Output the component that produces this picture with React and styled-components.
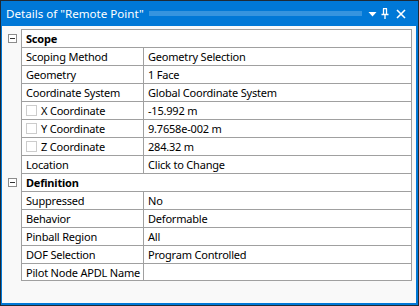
import React from 'react';
import styled, { createGlobalStyle } from 'styled-components';

const GlobalStyle = createGlobalStyle`
  html, body { margin: 0; padding: 0; background: #ffffff; }
  body { font-family: "Noto Sans", "Liberation Sans", sans-serif; }
`;

const Window = styled.div`
  width: 419px;
  height: 306px;
  box-sizing: border-box;
  border: 1px solid #1e2a36;
  background: #0078d7;
  display: flex;
  flex-direction: column;
`;

const TitleBar = styled.div`
  height: 25px;
  display: flex;
  align-items: center;
  padding: 0 12px 0 5px;
  color: #ffffff;
  font-size: 11.6px;
  gap: 5px;
`;

const Title = styled.span`
  white-space: nowrap;
`;

const Grip = styled.div`
  flex: 1;
  height: 5px;
  margin-right: 1px;
  background-image: radial-gradient(circle, rgba(255, 255, 255, 0.45) 0.6px, transparent 0.8px);
  background-size: 2px 2px;
`;

const TitleIcons = styled.div`
  display: flex;
  align-items: center;
  gap: 4px;
`;

const Body = styled.div`
  flex: 1;
  margin: 0 2px 2px 1px;
  background: #f9f9f9;
  padding: 3px 4px 0 6px;
`;

const Table = styled.div`
  display: grid;
  grid-template-columns: 13px 122px 1fr;
`;

const Toggle = styled.div`
  display: flex;
  align-items: center;
  justify-content: flex-start;
`;

const ToggleBox = styled.div`
  width: 9px;
  height: 9px;
  box-sizing: border-box;
  border: 1px solid #8c8c8c;
  background: #ffffff;
  display: flex;
  align-items: center;
  justify-content: center;
  &::after {
    content: '';
    width: 5px;
    height: 1px;
    background: #333;
  }
`;

const Cell = styled.div`
  height: 18px;
  box-sizing: border-box;
  display: flex;
  align-items: center;
  gap: 4px;
  padding-left: 4px;
  background: #ffffff;
  color: #000000;
  font-size: 11px;
  letter-spacing: -0.2px;
  font-weight: ${(p) => (p.$bold ? 700 : 400)};
  white-space: nowrap;
  border-left: 1px solid #a0a0a0;
  border-top: 1px solid #a0a0a0;
  border-right: ${(p) => (p.$last ? '1px solid #a0a0a0' : 'none')};
  border-bottom: ${(p) => (p.$bottom ? '1px solid #a0a0a0' : 'none')};
  grid-column: ${(p) => (p.$span ? 'span 2' : 'auto')};
`;

const Check = styled.span`
  width: 11px;
  height: 11px;
  box-sizing: border-box;
  border: 1px solid #cccccc;
  background: #ffffff;
  flex: none;
`;

const Blank = styled.div``;

const sections = [
  {
    name: 'Scope',
    rows: [
      ['Scoping Method', 'Geometry Selection'],
      ['Geometry', '1 Face'],
      ['Coordinate System', 'Global Coordinate System'],
      ['X Coordinate', '-15.992 m', true],
      ['Y Coordinate', '9.7658e-002 m', true],
      ['Z Coordinate', '284.32 m', true],
      ['Location', 'Click to Change'],
    ],
  },
  {
    name: 'Definition',
    rows: [
      ['Suppressed', 'No'],
      ['Behavior', 'Deformable'],
      ['Pinball Region', 'All'],
      ['DOF Selection', 'Program Controlled'],
      ['Pilot Node APDL Name', ''],
    ],
  },
];

function App() {
  const total = sections.reduce((n, s) => n + s.rows.length, 0);
  let count = 0;
  return (
    <Window>
      <GlobalStyle />
      <TitleBar>
        <Title>Details of "Remote Point"</Title>
        <Grip />
        <TitleIcons>
          <svg width="9" height="10" viewBox="0 0 9 10">
            <path d="M0.5 3 L8.5 3 L4.5 7.5 Z" fill="#fff" />
          </svg>
          <svg width="8" height="11" viewBox="0 0 8 11">
            <path d="M2 0.5 H6 M2.5 0.5 V6 M5.5 0.5 V6 M0.5 6.5 H7.5 M4 6.5 V11" stroke="#fff" strokeWidth="1.3" fill="none" />
          </svg>
          <svg width="10" height="10" viewBox="0 0 10 10" style={{ marginLeft: 3 }}>
            <path d="M1 1 L9 9 M9 1 L1 9" stroke="#fff" strokeWidth="1.6" />
          </svg>
        </TitleIcons>
      </TitleBar>
      <Body>
        <Table>
          {sections.map((s) => (
            <React.Fragment key={s.name}>
              <Toggle>
                <ToggleBox />
              </Toggle>
              <Cell $bold $span $last>
                {s.name}
              </Cell>
              {s.rows.map(([label, value, check]) => {
                count += 1;
                const bottom = count === total;
                return (
                  <React.Fragment key={label}>
                    <Blank />
                    <Cell $bottom={bottom}>
                      {check && <Check />}
                      {label}
                    </Cell>
                    <Cell $last $bottom={bottom}>
                      {value}
                    </Cell>
                  </React.Fragment>
                );
              })}
            </React.Fragment>
          ))}
        </Table>
      </Body>
    </Window>
  );
}

export default App;
